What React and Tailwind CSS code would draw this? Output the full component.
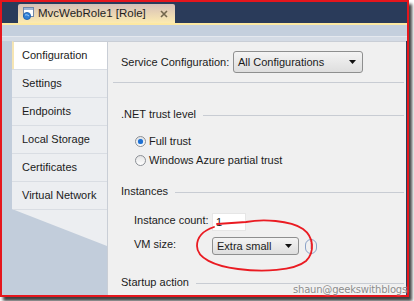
import React from 'react';

const tabs = ['Configuration', 'Settings', 'Endpoints', 'Local Storage', 'Certificates', 'Virtual Network'];

function Arrow() {
    return (
        <svg width="7" height="4" viewBox="0 0 7 4" className="shrink-0">
            <path d="M0 0 H7 L3.5 4 Z" fill="#111" />
        </svg>
    );
}

function Combo({ label, className }) {
    return (
        <div className={`flex items-center justify-between rounded-[3px] border border-[#8e8f8f] bg-gradient-to-b from-[#f4f4f4] to-[#dedede] pl-[4px] pr-[6px] ${className}`}>
            <span>{label}</span>
            <Arrow />
        </div>
    );
}

function Group({ title, className }) {
    return (
        <div className={`flex items-center h-[16px] pl-[13px] ${className}`}>
            <span>{title}</span>
            <div className="flex-1 h-px bg-[#c8ccd3] ml-[7px] mr-[2px] mt-[2px]" />
        </div>
    );
}

function Radio({ checked, label, className }) {
    return (
        <div className={`flex items-center h-[16px] pl-[27px] ${className}`}>
            <div className="w-[11px] h-[11px] rounded-full border border-[#8b8f95] bg-gradient-to-b from-[#e4e4e4] to-[#ffffff] flex items-center justify-center">
                {checked && <div className="w-[5px] h-[5px] rounded-full bg-[#1f6fd0] shadow-[0_0_1px_#4aa0ff]" />}
            </div>
            <span className="ml-[3px]">{label}</span>
        </div>
    );
}

export default function App() {
    return (
        <div className="relative w-[414px] h-[301px] bg-white overflow-hidden font-['Liberation_Sans',Arial,sans-serif] text-[11px] text-[#1b1b1b]">
            <div className="w-[409px] h-[297px] border-2 border-[#e5161d] bg-[#2a3b5a] shadow-[3px_4px_3px_rgba(0,0,0,0.75)] flex flex-col">
                {/* document tab strip */}
                <div className="h-[21px] flex items-end pl-[16px] shrink-0">
                    <div className="h-[19px] w-[157px] rounded-t-[2px] bg-gradient-to-b from-[#d6bfb7] to-[#fcebb0] flex items-center pl-[4px] pr-[6px]">
                        <svg width="13" height="13" viewBox="0 0 13 13" className="shrink-0">
                            <rect x="1.5" y="0.5" width="10" height="9" fill="#fff" stroke="#6f86a8" />
                            <rect x="2" y="1" width="9" height="2" fill="#9fb5d6" />
                            <circle cx="5" cy="9" r="3.6" fill="#2f7fd6" stroke="#1b5aa8" strokeWidth="0.8" />
                            <path d="M3 8 Q5 7 7 9" stroke="#bfe0ff" strokeWidth="0.8" fill="none" />
                        </svg>
                        <span className="ml-[3px] text-[11.5px] text-[#1e1e1e]">MvcWebRole1 [Role]</span>
                        <svg width="8" height="8" viewBox="0 0 8 8" className="ml-auto mr-[1px] mt-px">
                            <path d="M1 1 L7 7 M7 1 L1 7" stroke="#72664d" strokeWidth="1.6" />
                        </svg>
                    </div>
                </div>
                <div className="h-[2px] bg-[#fde9a2] shrink-0" />
                <div className="h-[11px] bg-[#c4cfdd] shrink-0" />
                <div className="h-px bg-[#e4e8ee] shrink-0" />
                <div className="h-[4px] bg-[#d4dbe5] shrink-0" />

                {/* body */}
                <div className="flex-1 flex bg-[#c2cddb] mr-px min-h-0">
                    <div className="w-[10px] shrink-0" />
                    <div className="w-[95px] shrink-0 flex flex-col">
                        {tabs.map((t, i) => (
                            <div
                                key={t}
                                className={
                                    i === 0
                                        ? 'h-[28px] flex items-center pl-[8px] bg-white border-l-2 border-[#f6e5b3] border-t border-t-[#c9ced6]'
                                        : 'h-[28px] flex items-center pl-[10px] bg-[#eceef1] border-t border-[#d9dde3]'
                                }
                            >
                                {t}
                            </div>
                        ))}
                        <div className="h-[37px] bg-[#eceef1] border-t border-[#d9dde3] [clip-path:polygon(0_0,100%_0,100%_100%)]" />
                    </div>
                    <div className="flex-1 min-w-0 bg-[#f0f0f0] border-l border-t border-[#c9ced6] flex flex-col">
                        <div className="flex items-center h-[22px] mt-[9px] pl-[13px]">
                            <span className="w-[112px]">Service Configuration:</span>
                            <Combo label="All Configurations" className="w-[130px] h-[22px]" />
                        </div>
                        <div className="h-px bg-[#c8ccd3] mt-[9px] ml-[5px] mr-[2px]" />
                        <Group title=".NET trust level" className="mt-[23px]" />
                        <Radio checked label="Full trust" className="mt-[11px]" />
                        <Radio label="Windows Azure partial trust" className="mt-[3px]" />
                        <Group title="Instances" className="mt-[15px]" />
                        <div className="flex items-center h-[18px] mt-[14px] pl-[26px]">
                            <span className="w-[78px] -mt-[3px]">Instance count:</span>
                            <div className="w-[34px] h-[18px] bg-white border border-[#e6e6e6] pl-[3px] flex items-center">1</div>
                        </div>
                        <div className="flex items-center h-[18px] mt-[6px] pl-[26px]">
                            <span className="w-[78px] -mt-[3px]">VM size:</span>
                            <Combo label="Extra small" className="w-[87px] h-[18px]" />
                            <div className="ml-[6px] w-[12px] h-[15px] rounded-full border border-[#8aa2c8] flex items-center justify-center text-[10px] text-[#6d88b8] leading-none">i</div>
                        </div>
                        <Group title="Startup action" className="mt-[19px]" />
                    </div>
                </div>
            </div>

            {/* hand-drawn annotation */}
            <svg className="absolute left-0 top-0 pointer-events-none" width="414" height="301" viewBox="0 0 414 301">
                <path
                    d="M217 224 L246 222 C262 219 290 220 303 229 C314 237 315 252 306 261 C294 271 262 272 238 269 C214 266 197 258 197 246 C197 236 205 230 214 227"
                    fill="none"
                    stroke="#ea1b22"
                    strokeWidth="1.8"
                    strokeLinecap="round"
                />
            </svg>

            <div className="absolute left-[293px] top-[282px] font-['DejaVu_Sans',Verdana,sans-serif] text-[10px] tracking-[-0.2px] text-[#8c8c8c] [text-shadow:0_0_2px_#fff]">
                shaun@geekswithblogs
            </div>
        </div>
    );
}
